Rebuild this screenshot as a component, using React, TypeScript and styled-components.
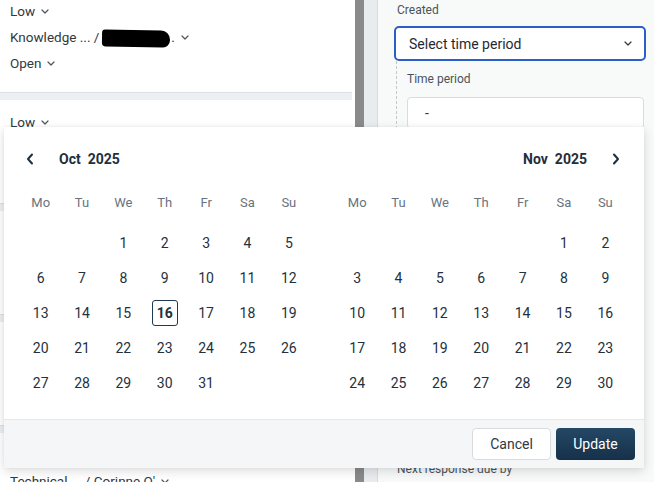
import React from 'react'
import styled, { createGlobalStyle } from 'styled-components'

const GlobalStyle = createGlobalStyle`
  html, body {
    margin: 0;
    padding: 0;
  }
  body {
    font-family: Roboto, "Liberation Sans", Arial, sans-serif;
    color: #2f3941;
    background: #fff;
    overflow: hidden;
  }
  #root {
    width: 654px;
    height: 482px;
  }
`

const Page = styled.div`
  position: relative;
  display: flex;
  width: 654px;
  height: 482px;
  overflow: hidden;
`

/* ---------- left ticket list ---------- */
const ListPane = styled.div`
  width: 355px;
  flex: none;
  background: #fff;
  overflow: hidden;
`
const List = styled.div`
  width: 352px;
  margin-top: -11px;
`
const Card = styled.div`
  height: 103px;
  box-sizing: border-box;
  padding: 9px 0 0 10px;
  display: flex;
  flex-direction: column;
`
const Band = styled.div`
  height: 8px;
  box-sizing: border-box;
  background: #eceff2;
  border-top: 1px solid #dcdfe3;
`
const Row = styled.div`
  height: 26px;
  display: flex;
  align-items: center;
  gap: 6px;
  font-size: 13.5px;
  color: #2f3941;
  white-space: nowrap;
`
const Value = styled.span`
  display: flex;
  align-items: center;
`
const Redacted = styled.span`
  display: inline-block;
  width: 68px;
  height: 17px;
  margin: 2px 1px 0 3px;
  background: #000;
  border-radius: 3px 9px 7px 4px;
  transform: rotate(1deg);
`

const Scrollbar = styled.div`
  width: 9px;
  flex: none;
  background: #8a8a8a;
`
const Gutter = styled.div`
  width: 13px;
  flex: none;
  background: #e9ecef;
  border-right: 1px solid #d8dcde;
`

/* ---------- right filter pane ---------- */
const SidePane = styled.div`
  flex: 1;
  background: #f8f9f9;
  padding: 2px 8px 0 16px;
  display: flex;
  flex-direction: column;
`
const Label = styled.div<{ $top?: number }>`
  font-size: 12px;
  line-height: 16px;
  color: #49545c;
  margin-top: ${p => p.$top ?? 0}px;
  margin-left: 3px;
`
const SelectBox = styled.div<{ $focused?: boolean; $top?: number }>`
  margin-top: ${p => p.$top ?? 8}px;
  margin-right: ${p => (p.$focused ? 0 : 2)}px;
  height: 35px;
  flex: none;
  box-sizing: border-box;
  border: ${p => (p.$focused ? '2px solid #2b5fc8' : '1px solid #d8dcde')};
  border-radius: 5px;
  background: #fff;
  display: flex;
  align-items: center;
  justify-content: space-between;
  padding: 0 12px 0 13px;
  font-size: 14px;
  color: #1f2933;
`
const Nested = styled.div`
  margin: 0 2px 0 2px;
  padding: 10px 0 12px 10px;
  border-left: 1px dashed #c2c8cc;
  display: flex;
  flex-direction: column;
`
const NestedLabel = styled.div`
  font-size: 12px;
  line-height: 16px;
  color: #49545c;
`
const Input = styled.div<{ $top?: number }>`
  margin-top: ${p => p.$top ?? 10}px;
  height: 32px;
  flex: none;
  box-sizing: border-box;
  border: 1px solid #d8dcde;
  border-radius: 4px;
  background: #fff;
  display: flex;
  align-items: center;
  padding-left: 17px;
  font-size: 14px;
  color: #2f3941;
`

/* ---------- date range popover ---------- */
const Popover = styled.div`
  position: absolute;
  left: 4px;
  top: 127px;
  width: 640px;
  height: 341px;
  background: #fff;
  box-shadow: 0 3px 10px rgba(0, 0, 0, 0.14), 0 0 2px rgba(0, 0, 0, 0.06);
  display: flex;
  flex-direction: column;
`
const Months = styled.div`
  flex: 1;
  display: flex;
  gap: 27px;
  padding: 16px 18px 0 16px;
`
const Month = styled.div`
  flex: 1;
`
const MonthHeader = styled.div<{ $end?: boolean }>`
  height: 32px;
  display: flex;
  align-items: center;
  justify-content: ${p => (p.$end ? 'flex-end' : 'flex-start')};
  gap: 19px;
`
const NavButton = styled.button`
  width: 20px;
  height: 24px;
  padding: 0;
  border: none;
  background: none;
  display: flex;
  align-items: center;
  justify-content: center;
  cursor: pointer;
`
const Title = styled.div`
  display: flex;
  gap: 7px;
  font-size: 14px;
  font-weight: 700;
  color: #1f2f3d;
`
const WeekRow = styled.div`
  margin-top: 17px;
  height: 20px;
  display: grid;
  grid-template-columns: repeat(7, 1fr);
  align-items: center;
  justify-items: center;
  font-size: 13px;
  color: #68737d;
`
const DaysGrid = styled.div`
  margin-top: 13px;
  display: grid;
  grid-template-columns: repeat(7, 1fr);
  grid-auto-rows: 35px;
  align-items: center;
  justify-items: center;
`
const Day = styled.div<{ $selected?: boolean }>`
  width: 26px;
  height: 26px;
  box-sizing: border-box;
  display: flex;
  align-items: center;
  justify-content: center;
  font-size: 14px;
  color: #24313d;
  border-radius: 3px;
  border: ${p => (p.$selected ? '1.5px solid #1f3a52' : '1.5px solid transparent')};
  font-weight: ${p => (p.$selected ? 700 : 400)};
`
const Footer = styled.div`
  height: 49px;
  box-sizing: border-box;
  border-top: 1px solid #e6e9ec;
  background: #f5f6f8;
  display: flex;
  align-items: center;
  justify-content: flex-end;
  gap: 5px;
  padding: 0 9px 1px 0;
`
const Button = styled.button<{ $primary?: boolean }>`
  height: 32px;
  min-width: 79px;
  padding: 0 14px;
  border-radius: 4px;
  font-family: inherit;
  font-size: 14px;
  cursor: pointer;
  border: ${p => (p.$primary ? 'none' : '1px solid #d8dcde')};
  background: ${p => (p.$primary ? 'linear-gradient(#244866, #163049)' : '#fff')};
  color: ${p => (p.$primary ? '#fff' : '#2f3941')};
`

const Chevron = ({ color = '#49545c' }: { color?: string }) => (
  <svg width="8" height="5" viewBox="0 0 8 5" fill="none">
    <path d="M1 1l3 3 3-3" stroke={color} strokeWidth="1.2" strokeLinecap="round" strokeLinejoin="round" />
  </svg>
)

const Arrow = ({ dir }: { dir: 'left' | 'right' }) => (
  <svg width="8" height="12" viewBox="0 0 8 12" fill="none">
    <path
      d={dir === 'left' ? 'M6 1.5L2 6l4 4.5' : 'M2 1.5L6 6l-4 4.5'}
      stroke="#1f2f3d"
      strokeWidth="2"
      strokeLinecap="round"
      strokeLinejoin="round"
    />
  </svg>
)

// rows covered by the calendar are left empty
const tickets = [
  ['Low', 'knowledge', 'Open'],
  ['Low', '', ''],
  ['', '', ''],
  ['', '', ''],
  ['', "Technical ... / Corinne O'", ''],
]

const weekdays = ['Mo', 'Tu', 'We', 'Th', 'Fr', 'Sa', 'Su']

const buildDays = (offset: number, count: number) => {
  const cells: (number | null)[] = []
  for (let i = 0; i < offset; i++) cells.push(null)
  for (let d = 1; d <= count; d++) cells.push(d)
  return cells
}

const Field = ({ text }: { text: string }) => {
  if (!text) return <Row />
  if (text === 'knowledge')
    return (
      <Row>
        <Value>
          Knowledge ... /
          <Redacted />.
        </Value>
        <Chevron />
      </Row>
    )
  return (
    <Row>
      {text} <Chevron />
    </Row>
  )
}

const MonthView = ({
  name,
  year,
  offset,
  count,
  selected,
  nav,
}: {
  name: string
  year: number
  offset: number
  count: number
  selected?: number
  nav: 'left' | 'right'
}) => (
  <Month>
    <MonthHeader $end={nav === 'right'}>
      {nav === 'left' && (
        <NavButton aria-label="Previous month">
          <Arrow dir="left" />
        </NavButton>
      )}
      <Title>
        <span>{name}</span>
        <span>{year}</span>
      </Title>
      {nav === 'right' && (
        <NavButton aria-label="Next month">
          <Arrow dir="right" />
        </NavButton>
      )}
    </MonthHeader>
    <WeekRow>
      {weekdays.map(w => (
        <span key={w}>{w}</span>
      ))}
    </WeekRow>
    <DaysGrid>
      {buildDays(offset, count).map((d, i) =>
        d === null ? <span key={i} /> : <Day key={i} $selected={d === selected}>{d}</Day>
      )}
    </DaysGrid>
  </Month>
)

export default function App() {
  return (
    <>
      <GlobalStyle />
      <Page>
        <ListPane>
          <List>
            {tickets.map((t, i) => (
              <React.Fragment key={i}>
                <Card>
                  {t.map((f, j) => (
                    <Field key={j} text={f} />
                  ))}
                </Card>
                <Band />
              </React.Fragment>
            ))}
          </List>
        </ListPane>
        <Scrollbar />
        <Gutter />
        <SidePane>
          <Label>Created</Label>
          <SelectBox $focused>
            Select time period <Chevron color="#2f3941" />
          </SelectBox>
          <Nested>
            <NestedLabel>Time period</NestedLabel>
            <Input>-</Input>
            {/* start / end date fields, covered by the calendar */}
            <Input $top={42} />
            <Input $top={42} />
          </Nested>
          {/* updated / solved selects, covered by the calendar */}
          <SelectBox $top={40} />
          <SelectBox $top={40} />
          <Label $top={22}>Next response due by</Label>
        </SidePane>

        <Popover>
          <Months>
            <MonthView name="Oct" year={2025} offset={2} count={31} selected={16} nav="left" />
            <MonthView name="Nov" year={2025} offset={5} count={30} nav="right" />
          </Months>
          <Footer>
            <Button>Cancel</Button>
            <Button $primary>Update</Button>
          </Footer>
        </Popover>
      </Page>
    </>
  )
}
